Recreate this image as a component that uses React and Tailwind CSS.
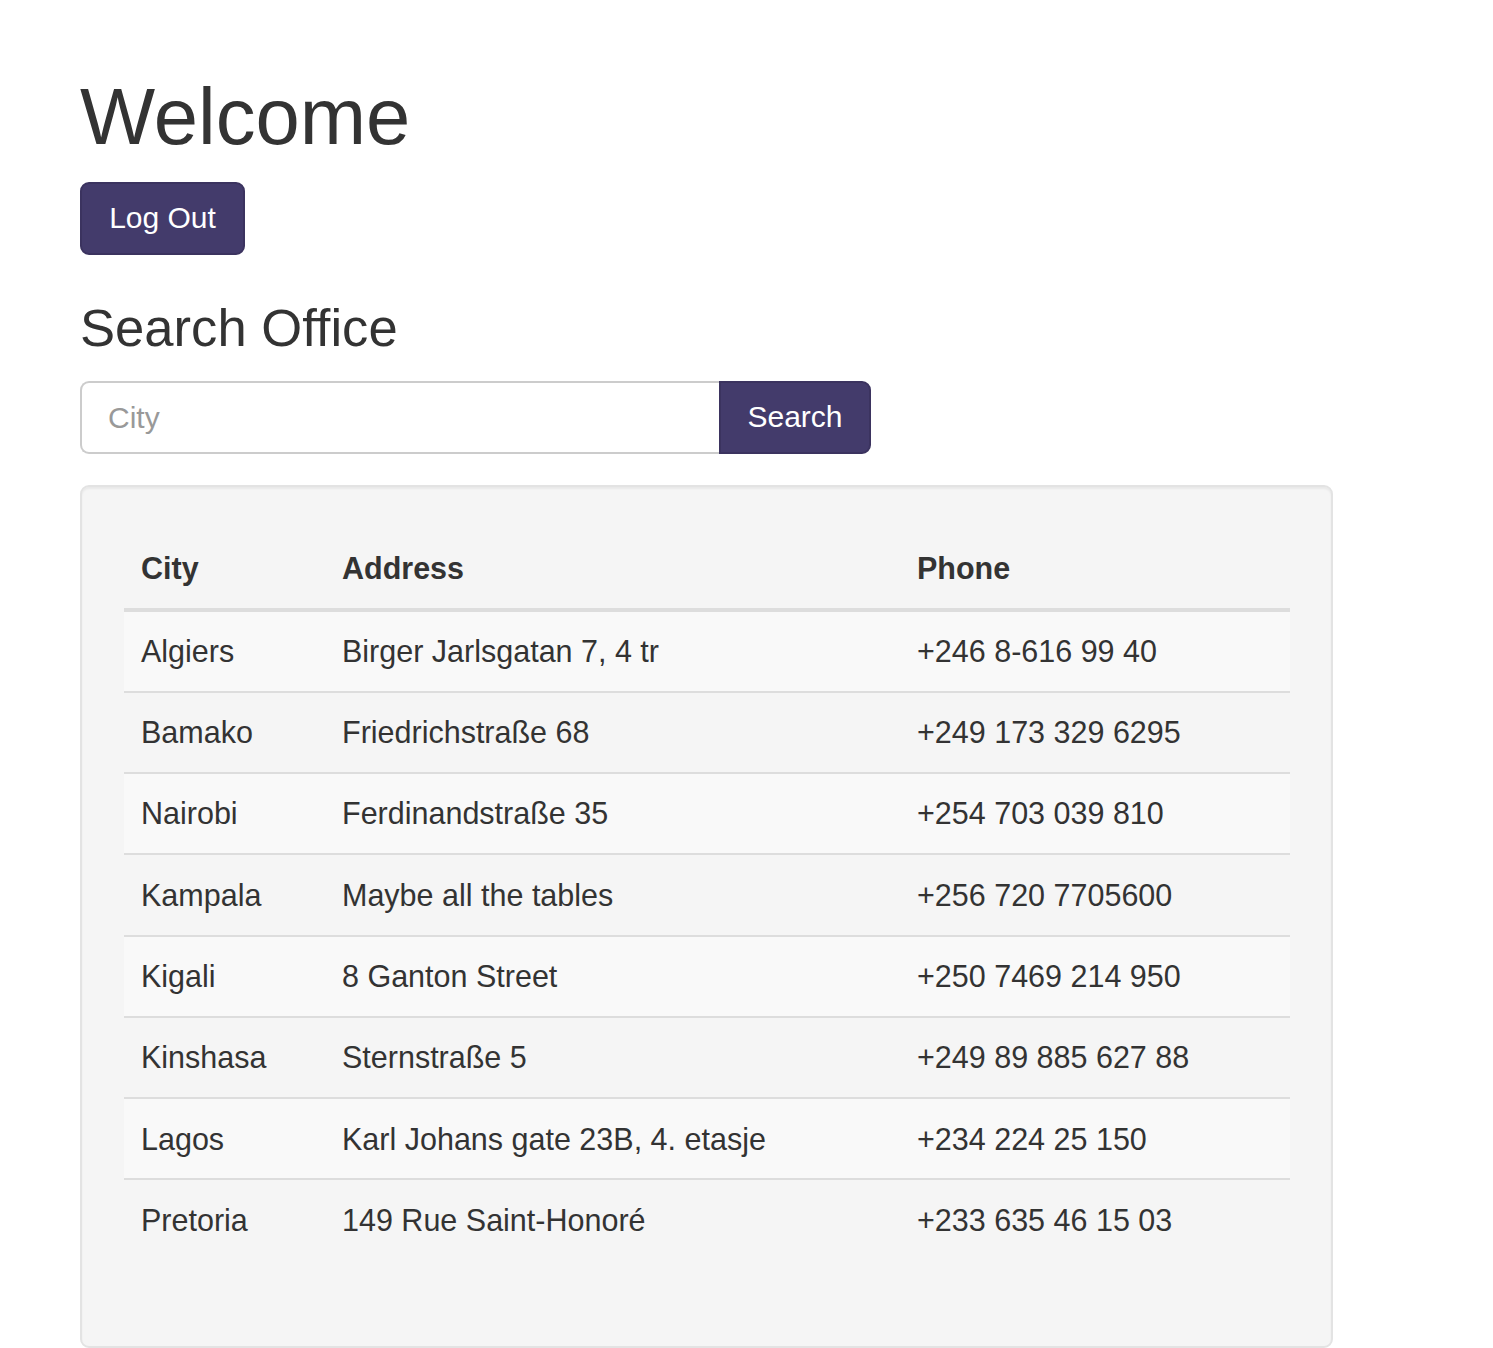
const offices = [
  { city: 'Algiers', address: 'Birger Jarlsgatan 7, 4 tr', phone: '+246 8-616 99 40' },
  { city: 'Bamako', address: 'Friedrichstraße 68', phone: '+249 173 329 6295' },
  { city: 'Nairobi', address: 'Ferdinandstraße 35', phone: '+254 703 039 810' },
  { city: 'Kampala', address: 'Maybe all the tables', phone: '+256 720 7705600' },
  { city: 'Kigali', address: '8 Ganton Street', phone: '+250 7469 214 950' },
  { city: 'Kinshasa', address: 'Sternstraße 5', phone: '+249 89 885 627 88' },
  { city: 'Lagos', address: 'Karl Johans gate 23B, 4. etasje', phone: '+234 224 25 150' },
  { city: 'Pretoria', address: '149 Rue Saint-Honoré', phone: '+233 635 46 15 03' },
];

export default function App() {
  return (
    <div className="min-h-screen bg-white text-[#333] font-['Liberation_Sans',Arial,sans-serif] text-[30.5px] leading-[44.5px]">
      <div className="pl-[80px] pr-[160px] pt-[73px]">
        <h1 className="text-[79.6px] leading-[87px] font-normal mb-[22px]">Welcome</h1>
        <button className="h-[73px] w-[165px] rounded-[9px] bg-[#433b6b] text-white text-[30px] border-2 border-[#3b335f]">
          Log Out
        </button>

        <h3 className="mt-[44px] mb-[24px] text-[52.6px] leading-[58px] font-normal">Search Office</h3>

        <div className="flex mb-[31px]">
          <input
            type="text"
            placeholder="City"
            className="h-[73px] w-[639px] border-2 border-r-0 border-[#ccc] rounded-l-[9px] px-[26px] text-[30px] placeholder:text-[#999] outline-none"
          />
          <button className="h-[73px] w-[152px] rounded-r-[9px] bg-[#433b6b] text-white text-[30px] border-2 border-[#3b335f]">
            Search
          </button>
        </div>

        <div className="w-[1253px] bg-[#f5f5f5] border-2 border-[#e3e3e3] rounded-[9px] p-[42px] shadow-[inset_0_2px_2px_rgba(0,0,0,0.05)]">
          <table className="w-[1166px] border-collapse mb-[44px] table-fixed">
            <colgroup>
              <col className="w-[201px]" />
              <col className="w-[575px]" />
              <col className="w-[390px]" />
            </colgroup>
            <thead>
              <tr>
                <th className="text-left font-bold px-[17px] py-[17px] border-b-4 border-[#ddd]">City</th>
                <th className="text-left font-bold px-[17px] py-[17px] border-b-4 border-[#ddd]">Address</th>
                <th className="text-left font-bold px-[17px] py-[17px] border-b-4 border-[#ddd]">Phone</th>
              </tr>
            </thead>
            <tbody>
              {offices.map((o, i) => (
                <tr key={o.city} className={i % 2 === 0 ? 'bg-[#f9f9f9]' : ''}>
                  <td className={`px-[17px] py-[17.4px] ${i > 0 ? 'border-t-2 border-[#ddd]' : ''}`}>{o.city}</td>
                  <td className={`px-[17px] py-[17.4px] ${i > 0 ? 'border-t-2 border-[#ddd]' : ''}`}>{o.address}</td>
                  <td className={`px-[17px] py-[17.4px] ${i > 0 ? 'border-t-2 border-[#ddd]' : ''}`}>{o.phone}</td>
                </tr>
              ))}
            </tbody>
          </table>
        </div>
      </div>
    </div>
  );
}
